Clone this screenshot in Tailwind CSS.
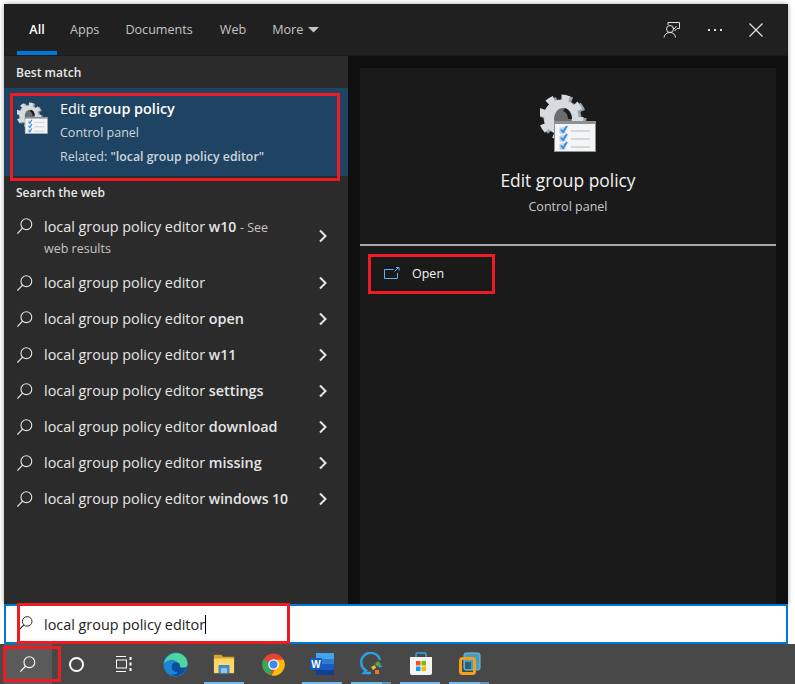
<!DOCTYPE html>
<html lang="en">
<head>
<meta charset="UTF-8">
<title>Search</title>
<script src="https://cdn.jsdelivr.net/npm/@tailwindcss/browser@4"></script>
</head>
<body class="bg-white font-['Open_Sans',sans-serif]">
<svg class="hidden">
  <symbol id="mag" viewBox="0 0 20 20"><circle cx="11.5" cy="8" r="6" fill="none" stroke="currentColor" stroke-width="1.2"/><path d="M7.3 12.4 1.5 18.500" stroke="currentColor" stroke-width="1.4" fill="none"/></symbol>
  <symbol id="chev" viewBox="0 0 10 14"><path d="M2 1.500 7.500 7 2 12.500" fill="none" stroke="#e6e6e6" stroke-width="2"/></symbol>
  <symbol id="gear" viewBox="0 0 56 60">
    <g transform="translate(3 1)" fill="#9ba2a7" stroke="#9ba2a7"><circle cx="21" cy="25" r="17"/><circle cx="21" cy="25" r="19.500" fill="none" stroke-width="6" stroke-dasharray="7.650 7.650"/></g>
    <g fill="#d6dbdf" stroke="#d6dbdf"><circle cx="21" cy="25" r="17"/><circle cx="21" cy="25" r="19.500" fill="none" stroke-width="6" stroke-dasharray="7.650 7.650"/></g>
    <ellipse cx="23" cy="27" rx="9" ry="11" fill="#6a6e71"/>
    <path d="M25 16a9 11 0 0 1 7 11h-4a6 8 0 0 0-5-8Z" fill="#1a1a1a"/>
    <rect x="14.500" y="29.500" width="41" height="30" fill="#f3f5f6" stroke="#8d9194"/>
    <rect x="14" y="29" width="42" height="3" fill="#8d9194"/>
    <path d="M20 36h5v5h-5zM20 44h5v5h-5zM20 52h5v5h-5z" fill="#dfe6ee" stroke="#a3acb5" stroke-width=".6"/>
    <path d="M21 37.500 23 40 27 34M21 45.500 23 48 27 42M21 53.500 23 56 27 50" fill="none" stroke="#2f8fe8" stroke-width="2"/>
    <path d="M31 39h19M31 47h19M31 55h19" stroke="#b5babd" stroke-width="1"/>
  </symbol>
</svg>

<div class="relative w-[795px] h-[684px] overflow-hidden flex flex-col">
  <!-- search window -->
  <div class="ml-[4px] mt-[4px] w-[784px] h-[600px] flex flex-col bg-[#2b2b2b] shadow-[0_0_5px_rgba(0,0,0,0.35)]">
    <div class="h-[52px] shrink-0 bg-[#202020] border-b border-[#1a1a1a] flex items-center text-[12.6px] text-[#c4c4c4]">
      <div class="relative h-full w-[40px] ml-[13px] pt-[1px] flex items-center justify-center text-white font-semibold">All
        <div class="absolute left-0 bottom-0 h-[4px] w-[40px] bg-[#0078d7]"></div>
      </div>
      <span class="ml-[13px] pt-[1px]">Apps</span>
      <span class="ml-[26px] pt-[1px]">Documents</span>
      <span class="ml-[27px] pt-[1px]">Web</span>
      <span class="ml-[26px] pt-[1px]">More</span>
      <svg class="ml-[5px]" width="11" height="6" viewBox="0 0 11 6"><path d="M0 0h11L5.500 5.500Z" fill="#c4c4c4"/></svg>
      <div class="ml-auto flex items-center text-[#e0e0e0]">
        <svg width="18" height="18" viewBox="0 0 18 18" fill="none" stroke="currentColor" stroke-width="1"><circle cx="7" cy="8" r="3.500"/><path d="M1 16.500c.5-3.500 3-5 6-5s5 1.500 5.500 5M5 4V1.500h11.500V7.500H14L11.500 10M9.500 6.500l1.500 1.500 2.500-3"/></svg>
        <div class="ml-[27px] flex gap-[4px]"><i class="w-[2px] h-[2px] bg-current"></i><i class="w-[2px] h-[2px] bg-current"></i><i class="w-[2px] h-[2px] bg-current"></i></div>
        <svg class="ml-[27px] mr-[25px]" width="14" height="14" viewBox="0 0 14 14" stroke="currentColor" stroke-width="1.300"><path d="M.5.500l13 13M13.500.500l-13 13"/></svg>
      </div>
    </div>

    <div class="flex flex-1 min-h-0">
      <!-- results -->
      <div class="w-[344px] shrink-0 text-[#e6e6e6]">
        <div class="h-[32px] pl-[12px] pt-[1px] flex items-center text-[12px] font-semibold text-[#e8e8e8]">Best match</div>
        <div class="h-[88px] bg-[#1f4363] flex">
          <svg class="ml-[13px] mt-[13px] shrink-0" width="31" height="33"><use href="#gear"/></svg>
          <div class="ml-[12px] pt-[9px] text-white">
            <div class="text-[14.4px] leading-[24px]">Edit <b class="font-semibold">group policy</b></div>
            <div class="text-[12.5px] leading-[24px] text-[#ced6dd]">Control panel</div>
            <div class="text-[12.5px] leading-[24px] text-[#ced6dd]">Related: <b class="font-semibold text-[12.3px]">"local group policy editor"</b></div>
          </div>
        </div>
        <div class="h-[33px] pl-[12px] flex items-center text-[12px] font-semibold text-[#e8e8e8]">Search the web</div>

        <div class="h-[56px] flex">
          <svg class="ml-[12px] mt-[8px] shrink-0" width="18" height="18"><use href="#mag"/></svg>
          <div class="ml-[10px] w-[274px] text-[14.4px] leading-[21px] pt-[7px]">
            <div>local group policy editor <b class="font-semibold text-[14px]">w10</b> <span class="text-[12.5px] text-[#c4c4c4]">- See</span></div>
            <div class="text-[12.5px] text-[#c4c4c4]">web results</div>
          </div>
          <svg class="mt-[20px]" width="10" height="14"><use href="#chev"/></svg>
        </div>
        <div class="h-[36px] flex items-center"><svg class="ml-[12px] shrink-0" width="18" height="18"><use href="#mag"/></svg><div class="ml-[10px] w-[274px] text-[14.4px]">local group policy editor</div><svg width="10" height="14"><use href="#chev"/></svg></div>
        <div class="h-[36px] flex items-center"><svg class="ml-[12px] shrink-0" width="18" height="18"><use href="#mag"/></svg><div class="ml-[10px] w-[274px] text-[14.4px]">local group policy editor <b class="font-semibold">open</b></div><svg width="10" height="14"><use href="#chev"/></svg></div>
        <div class="h-[36px] flex items-center"><svg class="ml-[12px] shrink-0" width="18" height="18"><use href="#mag"/></svg><div class="ml-[10px] w-[274px] text-[14.4px]">local group policy editor <b class="font-semibold text-[14px]">w11</b></div><svg width="10" height="14"><use href="#chev"/></svg></div>
        <div class="h-[36px] flex items-center"><svg class="ml-[12px] shrink-0" width="18" height="18"><use href="#mag"/></svg><div class="ml-[10px] w-[274px] text-[14.4px]">local group policy editor <b class="font-semibold">settings</b></div><svg width="10" height="14"><use href="#chev"/></svg></div>
        <div class="h-[36px] flex items-center"><svg class="ml-[12px] shrink-0" width="18" height="18"><use href="#mag"/></svg><div class="ml-[10px] w-[274px] text-[14.4px]">local group policy editor <b class="font-semibold">download</b></div><svg width="10" height="14"><use href="#chev"/></svg></div>
        <div class="h-[36px] flex items-center"><svg class="ml-[12px] shrink-0" width="18" height="18"><use href="#mag"/></svg><div class="ml-[10px] w-[274px] text-[14.4px]">local group policy editor <b class="font-semibold">missing</b></div><svg width="10" height="14"><use href="#chev"/></svg></div>
        <div class="h-[36px] flex items-center"><svg class="ml-[12px] shrink-0" width="18" height="18"><use href="#mag"/></svg><div class="ml-[10px] w-[274px] text-[14.4px]">local group policy editor <b class="font-semibold text-[14px]">windows 10</b></div><svg width="10" height="14"><use href="#chev"/></svg></div>
      </div>

      <!-- preview -->
      <div class="flex-1 bg-[#0f0f0f] pl-[12px] pr-[12px] pt-[12px]">
        <div class="h-full bg-[#1a1a1a]">
          <div class="h-[178px] flex flex-col items-center border-b-2 border-[#a9a9a9]">
            <svg class="mt-[24px]" width="56" height="60"><use href="#gear"/></svg>
            <div class="mt-[16px] text-[17.400px] leading-[24px] text-[#f2f2f2]">Edit group policy</div>
            <div class="mt-[6px] text-[12.5px] leading-[18px] text-[#c8c8c8]">Control panel</div>
          </div>
          <div class="flex items-center h-[56px] pl-[24px]">
            <svg class="mb-[3px]" width="16" height="12" viewBox="0 0 16 12" fill="none" stroke="#5db2f5" stroke-width="1"><path d="M9.500 2.500H.5v9h13V6M10.500 4.500l4-4M12 .5h3v3"/></svg>
            <span class="ml-[12px] pt-[1px] text-[12.5px] text-[#f2f2f2]">Open</span>
          </div>
        </div>
      </div>
    </div>
  </div>

  <!-- search box -->
  <div class="ml-[4px] w-[784px] h-[40px] bg-white border-2 border-[#0078d7] flex items-center pt-[1px] text-[14.4px] text-[#222]">
    <svg class="ml-[12px] mb-[4px] text-[#222]" width="16" height="16"><use href="#mag"/></svg>
    <span class="ml-[10px]">local group policy editor</span><span class="w-px h-[19px] bg-black"></span>
  </div>

  <!-- taskbar -->
  <div class="flex-1 bg-[#484848] flex items-stretch">
    <div class="ml-[4px] w-[48px] bg-[#5a5a5a] flex items-center justify-center text-white"><svg width="18" height="18"><use href="#mag"/></svg></div>
    <div class="w-[48px] flex items-center justify-center"><div class="w-[15px] h-[15px] rounded-full border-2 border-white"></div></div>
    <div class="w-[48px] flex items-center justify-center">
      <svg width="18" height="16" viewBox="0 0 18 16" fill="none" stroke="#fff"><path d="M1 .5h10M1 15.500h10"/><rect x="1.500" y="4" width="10" height="8"/><rect x="14.500" y="1" width="2" height="3" fill="#fff" stroke="none"/><rect x="14.500" y="6.500" width="2" height="3" fill="#fff" stroke="none"/><rect x="14.500" y="12" width="2" height="3" fill="#fff" stroke="none"/></svg>
    </div>
    <!-- edge -->
    <div class="ml-[3px] w-[49px] flex items-center justify-center">
      <svg width="25" height="25" viewBox="0 0 26 26"><circle cx="13" cy="13" r="12.500" fill="#1b85d6"/><path d="M1 12C3 3 12-1 19 2c4 2 7 6 6.500 11-.5 3-4 4-7.500 3-3-1-2-4-4-6-3-3-9-3-13 2Z" fill="#4ed5a0"/><path d="M9 15c0-4 5-6 8-3 1 2 0 4 2 4 2 1 5 0 6-1-1 5-6 10-12 10-3 0-5-1-5-2 3 1 7 0 7-2-4 0-6-3-6-6Z" fill="#0c4f9c"/></svg>
    </div>
    <!-- explorer -->
    <div class="w-[49px] flex items-center justify-center relative">
      <svg class="mr-[1px]" width="22" height="20" viewBox="0 0 24 20"><path d="M1 0h8l2 2h12v4H1Z" fill="#d9a22d"/><rect x="1" y="4" width="22" height="16" fill="#ffd768"/><path d="M6 20V11h12v9h-3v-5H9v5Z" fill="#3b8fd9"/><rect x="9" y="15" width="6" height="5" fill="#8fc9f3"/></svg>
      <div class="absolute left-[4px] w-[40px] bottom-0 h-[2px] bg-[#76b9ed]"></div>
    </div>
    <!-- chrome -->
    <div class="w-[49px] flex items-center justify-center">
      <svg width="23" height="23" viewBox="0 0 24 24"><circle cx="12" cy="12" r="11.500" fill="#ea4335"/><path d="M12 12 1.500 6.500A11.500 11.500 0 0 0 9 23Z" fill="#34a853"/><path d="M12 7h10.500A11.500 11.500 0 0 1 10 23.500L15 14Z" fill="#fbbc05"/><circle cx="12" cy="12" r="5.500" fill="#fff"/><circle cx="12" cy="12" r="4.200" fill="#4285f4"/></svg>
    </div>
    <!-- word -->
    <div class="w-[49px] flex items-center justify-center relative">
      <svg class="mr-[1px]" width="24" height="22" viewBox="0 0 24 22"><rect x="6" width="18" height="22" rx="1" fill="#2b7cd3"/><rect x="6" width="18" height="6" fill="#41a5ee"/><rect x="6" y="11" width="18" height="6" fill="#185abd"/><rect x="6" y="17" width="18" height="5" fill="#103f91"/><rect y="5" width="12" height="12" rx="1" fill="#185abd"/><text x="6" y="14.500" text-anchor="middle" font-family="Liberation Sans" font-weight="700" font-size="10" fill="#fff">W</text></svg>
      <div class="absolute left-[4px] w-[40px] bottom-0 h-[2px] bg-[#76b9ed]"></div>
    </div>
    <!-- qq style -->
    <div class="w-[49px] flex items-center justify-center relative">
      <svg width="24" height="24" viewBox="0 0 24 24"><path d="M11 21H4l2-2.500A9.500 9.500 0 1 1 20 8" fill="none" stroke="#29a0e8" stroke-width="2.500"/><path d="M15 12l3-3 3 3-3 3Z" fill="#5aa83a"/><path d="M19 13l4 1-4 2Z" fill="#29a0e8"/><path d="M11 15l4-2 1 3-3 2Z" fill="#f0b73c"/><path d="M15 18h4v4h-4Z" fill="#e2772a"/></svg>
      <div class="absolute left-[4px] w-[40px] bottom-0 h-[2px] bg-[#5d93bd]"></div>
      <div class="absolute left-[4px] w-[31px] bottom-0 h-[2px] bg-[#76b9ed]"></div>
    </div>
    <!-- store -->
    <div class="w-[49px] flex items-center justify-center relative">
      <svg width="24" height="24" viewBox="0 0 24 24"><path d="M7 5V2a1 1 0 0 1 1-1h8a1 1 0 0 1 1 1v3" fill="none" stroke="#35a7e8" stroke-width="1.500"/><path d="M1 5h22v16a2 2 0 0 1-2 2H3a2 2 0 0 1-2-2Z" fill="#f4f4f4"/><rect x="7" y="9" width="4.500" height="4.500" fill="#f25022"/><rect x="12.500" y="9" width="4.500" height="4.500" fill="#7fba00"/><rect x="7" y="14.500" width="4.500" height="4.500" fill="#00a4ef"/><rect x="12.500" y="14.500" width="4.500" height="4.500" fill="#ffb900"/></svg>
      <div class="absolute left-[4px] w-[40px] bottom-0 h-[2px] bg-[#76b9ed]"></div>
    </div>
    <!-- vmware -->
    <div class="w-[49px] flex items-center justify-center relative">
      <svg width="22" height="24" viewBox="0 0 22 24"><rect x="5" y="1" width="16" height="17" rx="2" fill="#4a9cc0" stroke="#79c1dc"/><rect x="1.500" y="6.500" width="14" height="15" rx="2" fill="none" stroke="#f2a01e" stroke-width="3"/><rect x="6" y="10" width="6" height="7" fill="#2f5f73"/></svg>
      <div class="absolute left-[4px] w-[40px] bottom-0 h-[2px] bg-[#5d93bd]"></div>
      <div class="absolute left-[4px] w-[31px] bottom-0 h-[2px] bg-[#76b9ed]"></div>
    </div>
  </div>

  <!-- red annotation boxes -->
  <div class="absolute left-[10px] top-[93px] w-[330px] h-[88px] border-[3px] border-[#ed1c24]"></div>
  <div class="absolute left-[368px] top-[254px] w-[127px] h-[40px] border-[3px] border-[#ed1c24]"></div>
  <div class="absolute left-[17px] top-[603px] w-[273px] h-[41px] border-[3px] border-[#ed1c24]"></div>
  <div class="absolute left-[3px] top-[646px] w-[58px] h-[36px] border-[3px] border-[#ed1c24]"></div>
</div>
</body>
</html>
